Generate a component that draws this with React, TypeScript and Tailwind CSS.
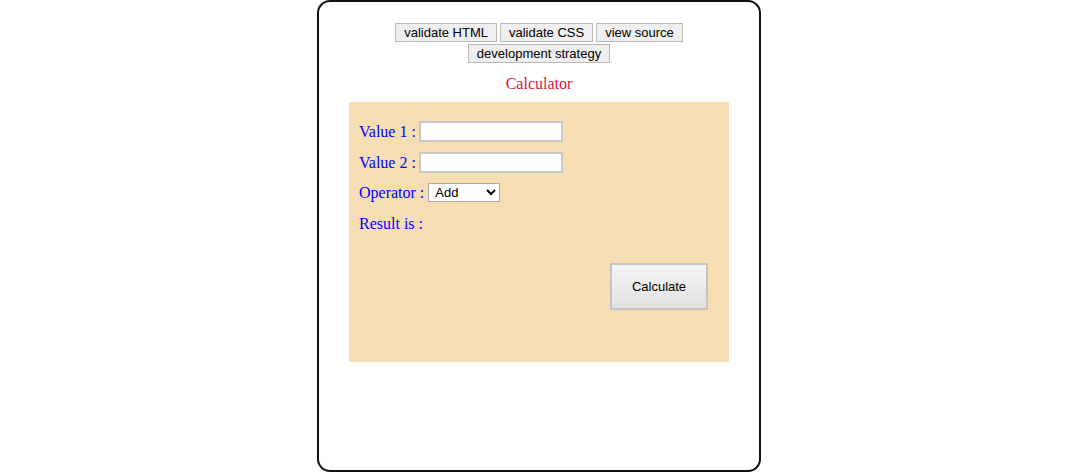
import React, { useState } from "react";

const sans = "font-['Liberation_Sans',Arial,sans-serif]";
const serif = "font-['Liberation_Serif','Times_New_Roman',serif]";

function TopButton({ label }: { label: string }) {
    return (
        <button className={`${sans} h-[19px] px-[8px] text-[13px] leading-[17px] text-black bg-[#efefef] border border-[#b8b8b8]`}>
            {label}
        </button>
    );
}

export default function App() {
    const [a, setA] = useState("");
    const [b, setB] = useState("");
    const [op, setOp] = useState("add");
    const [result, setResult] = useState("");

    function calculate() {
        const x = parseFloat(a);
        const y = parseFloat(b);
        if (isNaN(x) || isNaN(y)) return setResult("");
        let r = 0;
        if (op === "add") r = x + y;
        if (op === "sub") r = x - y;
        if (op === "mul") r = x * y;
        if (op === "div") r = x / y;
        setResult(String(r));
    }

    return (
        <div className="w-full h-[474px] bg-white">
            <div className="mx-auto w-[444px] h-[472px] border-2 border-[#111] rounded-[13px] pt-[21px]">
                <div className="flex justify-center gap-[3px]">
                    <TopButton label="validate HTML" />
                    <TopButton label="validate CSS" />
                    <TopButton label="view source" />
                </div>
                <div className="flex justify-center mt-[2px]">
                    <TopButton label="development strategy" />
                </div>
                <div className={`${serif} text-center text-[16px] leading-[20px] text-[#dc143c] mt-[11px]`}>Calculator</div>
                <div className={`${serif} mx-auto mt-[8px] w-[380px] h-[260px] bg-[#f5deb3] pt-[19px] pl-[10px] text-[16px] text-[#0000ff]`}>
                    <div className="flex items-center gap-[3px] h-[21px]">
                        <span>Value 1 :</span>
                        <input value={a} onChange={(e) => setA(e.target.value)} className="w-[144px] h-[21px] bg-white border-2 border-[#c8c8c8] text-black text-[13px] px-1 outline-none" />
                    </div>
                    <div className="flex items-center gap-[3px] h-[21px] mt-[10px]">
                        <span>Value 2 :</span>
                        <input value={b} onChange={(e) => setB(e.target.value)} className="w-[144px] h-[21px] bg-white border-2 border-[#c8c8c8] text-black text-[13px] px-1 outline-none" />
                    </div>
                    <div className="flex items-center gap-[4px] h-[21px] mt-[9px]">
                        <span>Operator :</span>
                        <select value={op} onChange={(e) => setOp(e.target.value)} className={`${sans} w-[72px] h-[19px] bg-white border border-[#a9a9a9] text-black text-[13px] pl-[2px]`}>
                            <option value="add">Add</option>
                            <option value="sub">Subtract</option>
                            <option value="mul">Multiply</option>
                            <option value="div">Divide</option>
                        </select>
                    </div>
                    <div className="flex items-center h-[21px] mt-[10px]">
                        <span>Result is : {result}</span>
                    </div>
                    <div className="flex justify-end pr-[21px] mt-[29px]">
                        <button onClick={calculate} className={`${sans} w-[98px] h-[47px] text-[13px] text-black bg-gradient-to-b from-[#f3f3f3] to-[#e3e3e3] border-2 border-[#c4c4c4]`}>
                            Calculate
                        </button>
                    </div>
                </div>
            </div>
        </div>
    );
}
